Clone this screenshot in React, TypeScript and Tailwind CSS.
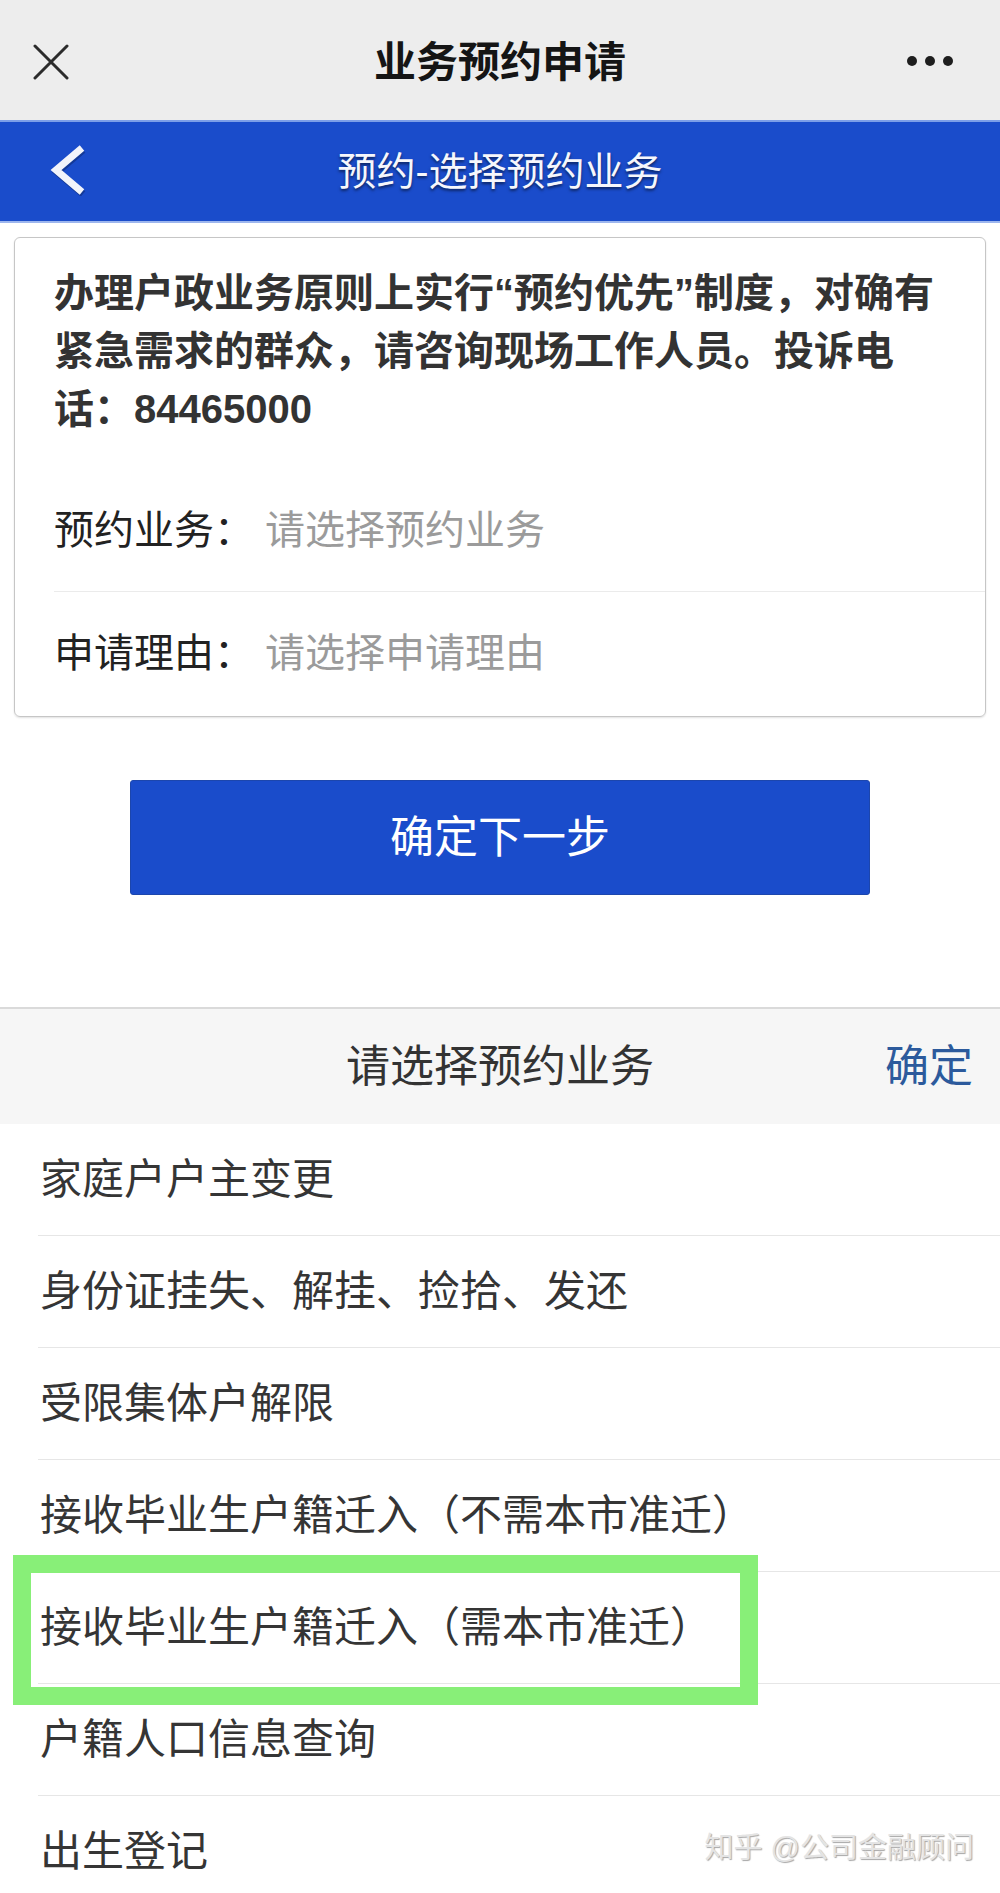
import React from "react";

const items = [
  "家庭户户主变更",
  "身份证挂失、解挂、捡拾、发还",
  "受限集体户解限",
  "接收毕业生户籍迁入（不需本市准迁）",
  "接收毕业生户籍迁入（需本市准迁）",
  "户籍人口信息查询",
  "出生登记",
];

export default function App() {
  return (
    <div className="relative w-[1000px] h-[1893px] overflow-hidden bg-white font-['Liberation_Sans','Noto_Sans_CJK_SC',sans-serif]">
      {/* WeChat top bar */}
      <header className="grid h-[120px] grid-cols-[1fr_auto_1fr] items-center bg-[#ededed]">
        <div className="pl-[33px]">
          <svg width="36" height="36" viewBox="0 0 36 36" className="mt-[4px]">
            <path d="M2 2 L34 34 M34 2 L2 34" stroke="#2b2b2b" strokeWidth="3" strokeLinecap="round" />
          </svg>
        </div>
        <h1 className="mt-[6px] text-[42px] font-semibold leading-none text-[#151515]">业务预约申请</h1>
        <div className="flex justify-end gap-[8px] pr-[47px] pt-[2px]">
          <span className="h-[10px] w-[10px] rounded-full bg-[#1e1e1e]" />
          <span className="h-[10px] w-[10px] rounded-full bg-[#1e1e1e]" />
          <span className="h-[10px] w-[10px] rounded-full bg-[#1e1e1e]" />
        </div>
      </header>

      {/* Blue nav bar */}
      <div className="relative flex h-[103px] items-center justify-center border-t-[2px] border-b-[2px] border-t-[#7d9fe8] border-b-[#9db6ee] bg-[#1a4ccb]">
        <svg width="40" height="52" viewBox="0 0 40 52" className="absolute left-[48px] top-[22px]">
          <polyline points="34,4 8,26 34,48" fill="none" stroke="rgba(0,0,0,0.25)" strokeWidth="7" strokeLinejoin="miter" transform="translate(1,2)" />
          <polyline points="34,4 8,26 34,48" fill="none" stroke="#f2f4fb" strokeWidth="7" strokeLinejoin="miter" />
        </svg>
        <span className="text-[39px] leading-none text-[#f6f7fc] [text-shadow:0_2px_3px_rgba(0,0,0,0.55)]">预约-选择预约业务</span>
      </div>

      {/* Form card */}
      <div className="pt-[14px]">
        <div className="mx-[14px] rounded-[6px] border border-[#c6c6c6] shadow-[0_1px_2px_rgba(0,0,0,0.12)]">
          <p className="whitespace-nowrap px-[39px] pt-[26px] text-[40px] font-bold leading-[58px] text-[#333333]">
            办理户政业务原则上实行“预约优先”制度，对确有
            <br />
            紧急需求的群众，请咨询现场工作人员。投诉电
            <br />
            话：84465000
          </p>
          <div className="mt-[30px] pl-[39px] pb-[3px]">
            <div className="flex h-[124px] items-center border-b border-[#ebebeb] text-[40px] leading-none">
              <span className="w-[211px] text-[#222222]">预约业务：</span>
              <span className="text-[#9b9b9b]">请选择预约业务</span>
            </div>
            <div className="flex h-[121px] items-center text-[40px] leading-none">
              <span className="w-[211px] text-[#222222]">申请理由：</span>
              <span className="text-[#9b9b9b]">请选择申请理由</span>
            </div>
          </div>
        </div>
      </div>

      {/* Next button */}
      <div className="mt-[63px] flex justify-center">
        <button className="flex h-[115px] w-[740px] items-center justify-center rounded-[3px] border border-[#1c46ad] bg-[#1a4ccb] text-[44px] leading-none text-white">
          确定下一步
        </button>
      </div>

      {/* Picker */}
      <div className="mt-[112px] border-t-[2px] border-[#dadada]">
        <div className="relative flex h-[115px] items-center justify-center bg-[#f6f6f6]">
          <span className="text-[44px] leading-none text-[#333333]">请选择预约业务</span>
          <span className="absolute right-[27px] text-[44px] leading-none text-[#2c5a9c]">确定</span>
        </div>
        <ul>
          {items.map((t, i) => (
            <li key={i} className="relative ml-[38px] flex h-[112px] items-center border-b border-[#e6e6e6] pl-[2px] text-[42px] leading-none text-[#353535]">
              {t}
              {i === 4 && (
                <div className="absolute left-[-25px] top-[-17px] h-[150px] w-[745px] border-[18px] border-[#88ef78]" />
              )}
            </li>
          ))}
        </ul>
      </div>

      {/* Watermark */}
      <div className="absolute right-[26px] top-[1834px] text-[29px] leading-none text-[#e4e4e4] [text-shadow:1px_1px_1px_rgba(0,0,0,0.35)]">
        知乎 @公司金融顾问
      </div>
    </div>
  );
}
